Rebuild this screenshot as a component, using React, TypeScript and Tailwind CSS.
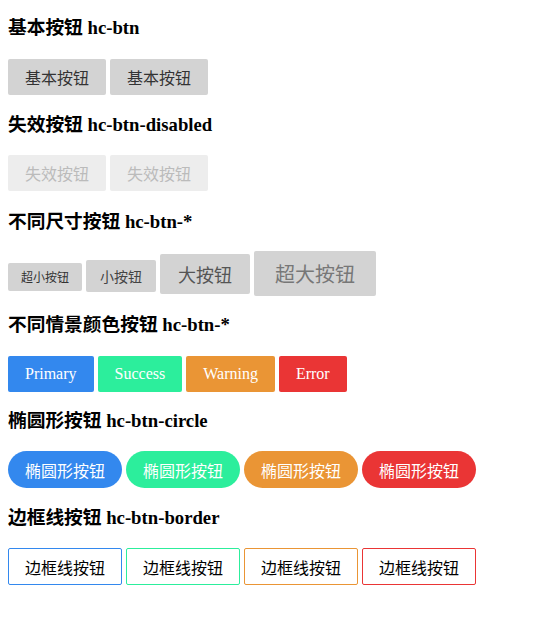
import React from "react";

const headFont = { fontFamily: '"Liberation Serif", "Noto Sans CJK SC", serif' };
const cjk = { fontFamily: '"Noto Sans CJK SC", "Liberation Sans", sans-serif' };
const serif = { fontFamily: '"Liberation Serif", "Noto Sans CJK SC", serif' };

function H({ children, mb = "mb-[19px]" }: { children: React.ReactNode; mb?: string }) {
  return (
    <h3 className={`text-[18.72px] font-bold leading-[22px] h-[22px] text-black ${mb}`} style={headFont}>
      {children}
    </h3>
  );
}

const colors = ["#3388ee", "#2cee9c", "#ea9535", "#ea3535"];

export default function App() {
  return (
    <div className="bg-white w-[553px] h-[619px] px-2 pt-[17px]">
      <H>基本按钮 hc-btn</H>
      <div className="flex gap-1 h-[37px] items-start pt-px mb-[19px]">
        {[0, 1].map((i) => (
          <span key={i} className="inline-flex items-center justify-center h-[36px] px-[17px] rounded-[2px] bg-[#d3d3d3] text-[#333] text-[16px]" style={cjk}>
            基本按钮
          </span>
        ))}
      </div>
      <H>失效按钮 hc-btn-disabled</H>
      <div className="flex gap-1 h-[37px] items-start mb-[19px]">
        {[0, 1].map((i) => (
          <span key={i} className="inline-flex items-center justify-center h-[36px] px-[17px] rounded-[2px] bg-[#ededed] text-[#bbbbbb] text-[16px]" style={cjk}>
            失效按钮
          </span>
        ))}
      </div>
      <H mb="mb-[18px]">不同尺寸按钮 hc-btn-*</H>
      <div className="flex gap-1 h-[45px] items-baseline mb-[18px]" style={cjk}>
        <span className="inline-flex items-center justify-center h-[28px] px-[13px] rounded-[2px] bg-[#d3d3d3] text-[#333] text-[12px]">超小按钮</span>
        <span className="inline-flex items-center justify-center h-[32px] px-[14px] rounded-[2px] bg-[#d3d3d3] text-[#444] text-[14px]">小按钮</span>
        <span className="inline-flex items-center justify-center h-[40px] px-[18px] rounded-[2px] bg-[#d3d3d3] text-[#555] text-[18px]">大按钮</span>
        <span className="inline-flex items-center justify-center h-[45px] px-[21px] rounded-[2px] bg-[#d3d3d3] text-[#777] text-[20px]">超大按钮</span>
      </div>
      <H>不同情景颜色按钮 hc-btn-*</H>
      <div className="flex gap-1 h-[37px] items-start pt-px mb-[18px]">
        {["Primary", "Success", "Warning", "Error"].map((t, i) => (
          <span key={t} className="inline-flex items-center justify-center h-[36px] px-[17px] rounded-[2px] text-white text-[16px]" style={{ ...serif, backgroundColor: colors[i] }}>
            {t}
          </span>
        ))}
      </div>
      <H>椭圆形按钮 hc-btn-circle</H>
      <div className="flex gap-1 h-[37px] items-start mb-[19px]">
        {colors.map((c) => (
          <span key={c} className="inline-flex items-center justify-center h-[37px] px-[17px] rounded-full text-white text-[16px]" style={{ ...cjk, backgroundColor: c }}>
            椭圆形按钮
          </span>
        ))}
      </div>
      <H>边框线按钮 hc-btn-border</H>
      <div className="flex gap-1 h-[37px] items-start">
        {colors.map((c) => (
          <span key={c} className="inline-flex items-center justify-center h-[37px] px-[16px] border rounded-[2px] bg-white text-black text-[16px]" style={{ ...cjk, borderColor: c }}>
            边框线按钮
          </span>
        ))}
      </div>
    </div>
  );
}
